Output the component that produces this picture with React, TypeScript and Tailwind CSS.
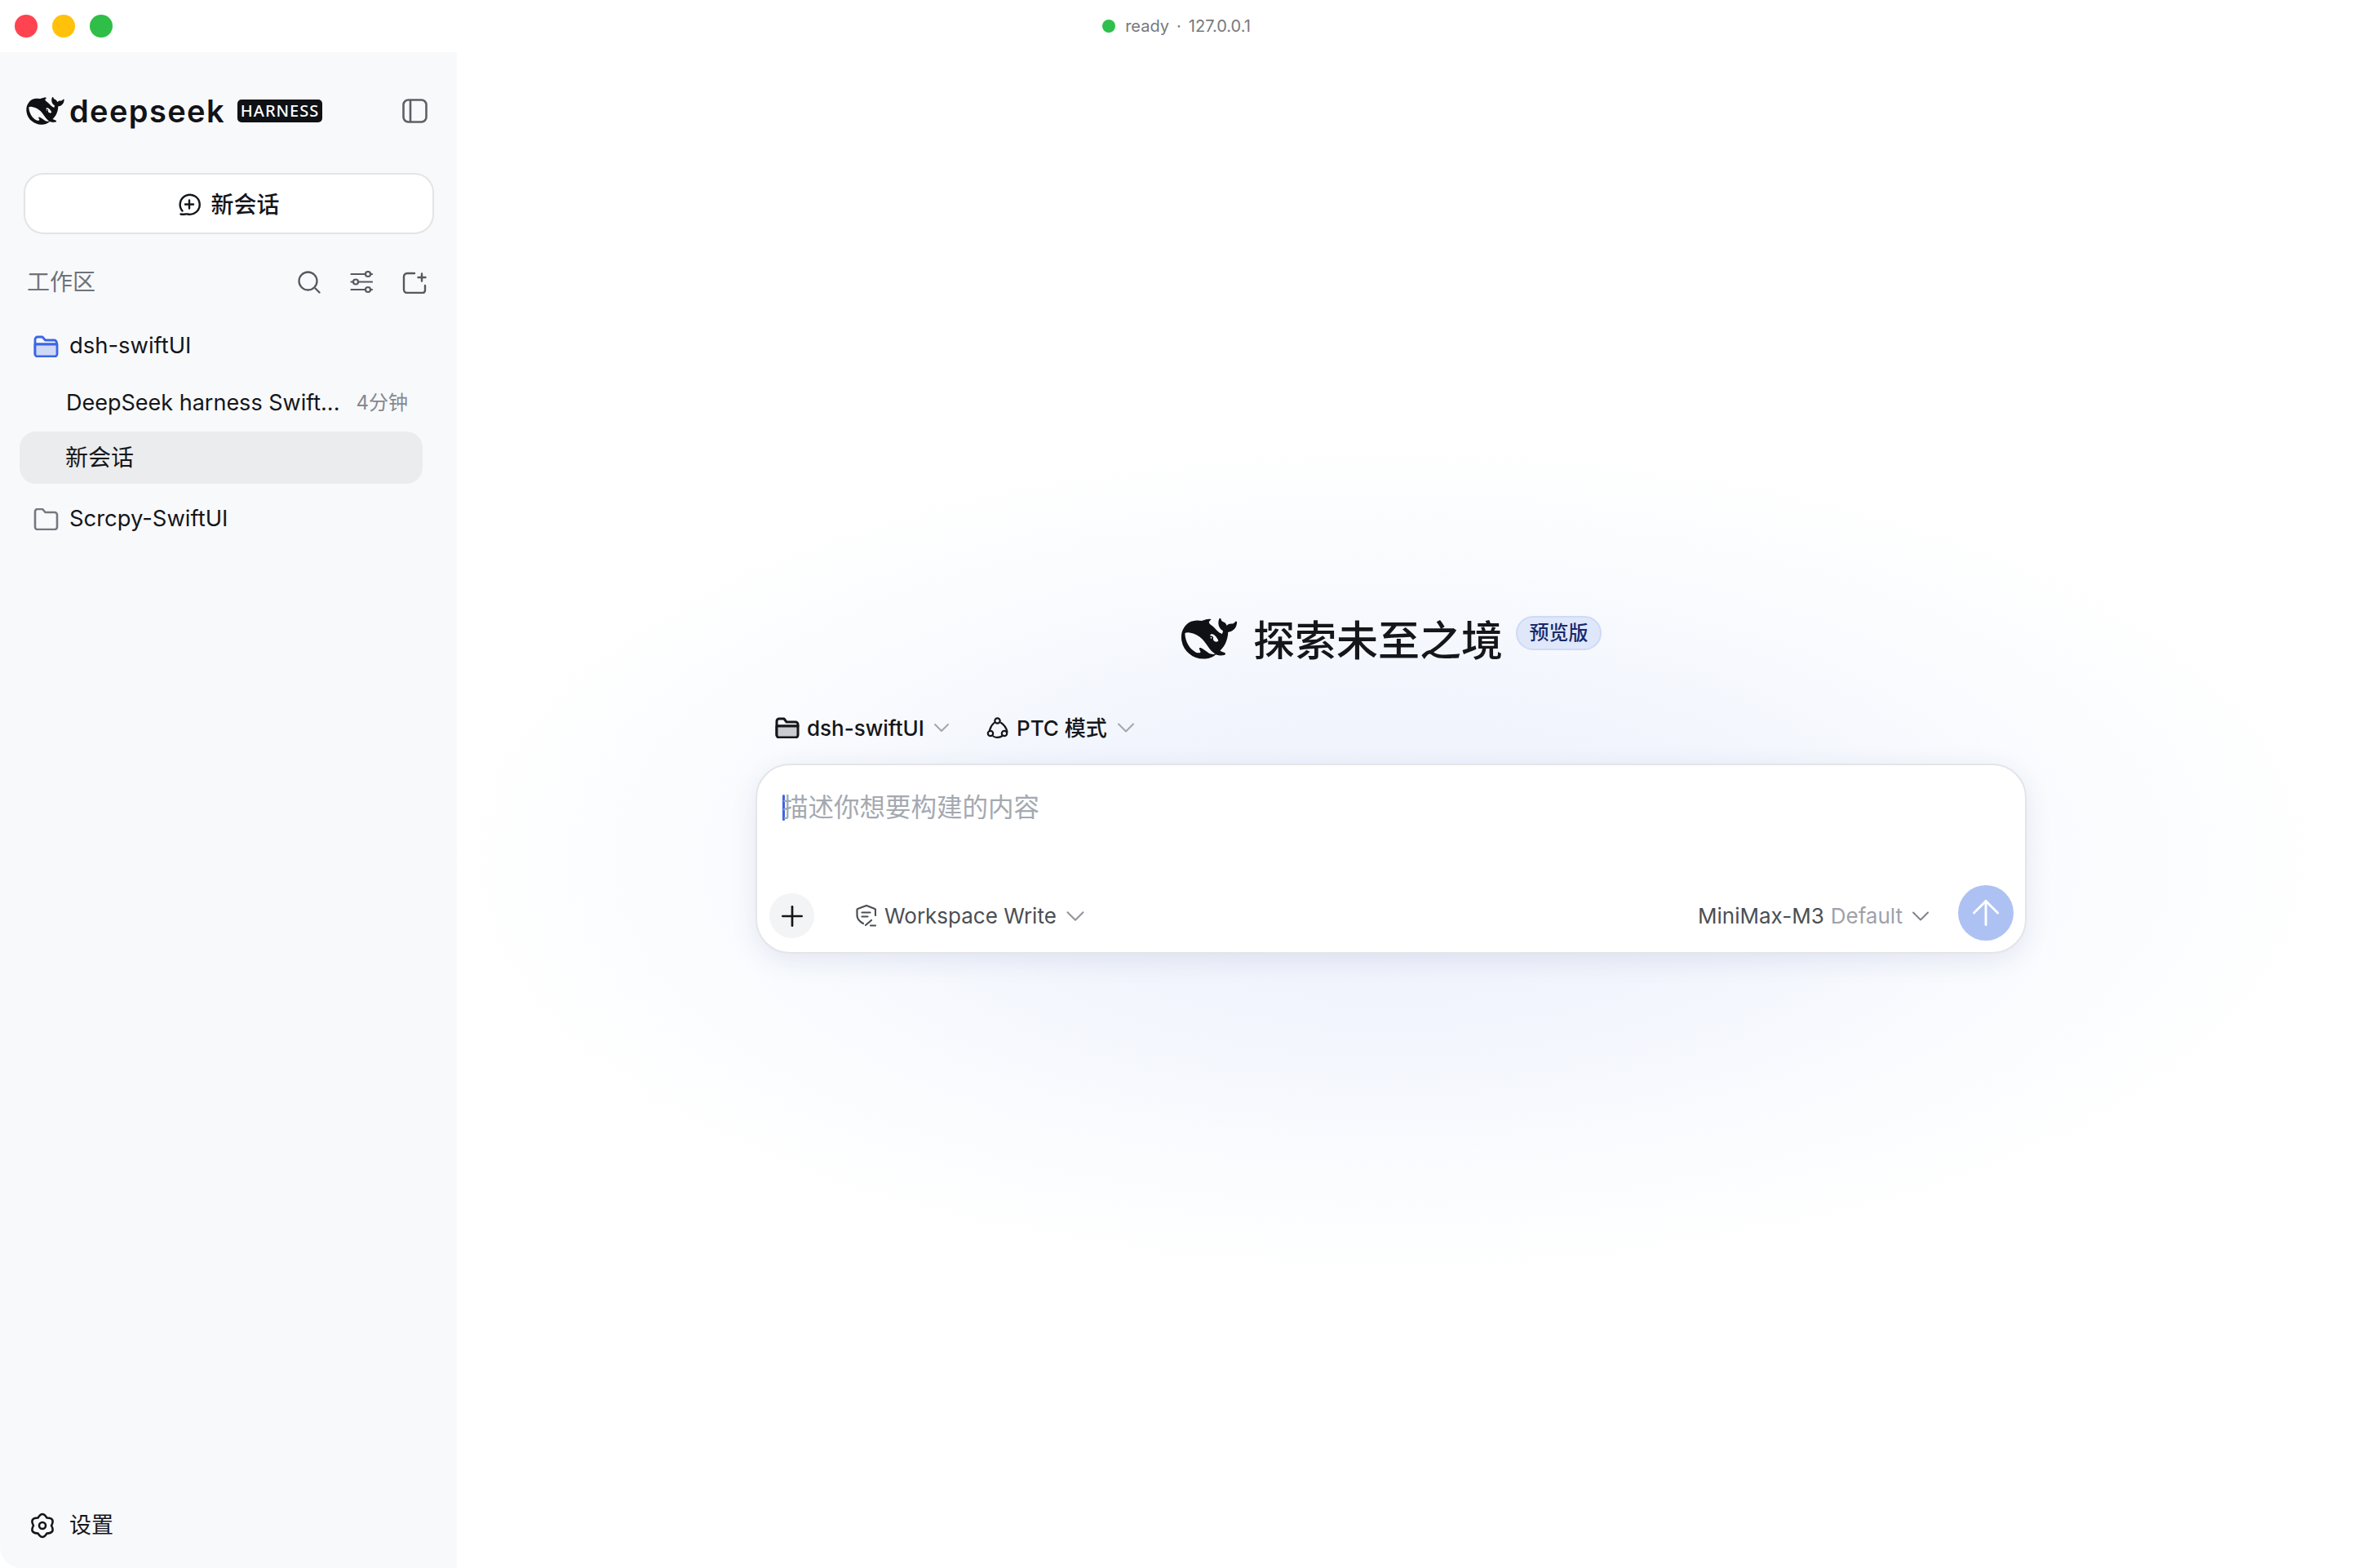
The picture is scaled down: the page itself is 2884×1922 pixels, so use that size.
import { ChevronDown, Plus, ArrowUp } from "lucide-react";

function Whale({ className }: { className: string }) {
  return (
    <svg className={className} viewBox="0 3.2 24 17.6" fill="#0f1114">
      <path d="M23.748 4.482c-.254-.124-.364.113-.512.234-.051.039-.094.09-.137.136-.372.397-.806.657-1.373.626-.829-.046-1.537.214-2.163.848-.133-.782-.575-1.248-1.247-1.548-.352-.156-.708-.311-.955-.65-.172-.241-.219-.51-.305-.774-.055-.16-.11-.323-.293-.35-.2-.031-.278.136-.356.276-.313.572-.434 1.202-.422 1.84.027 1.436.633 2.58 1.838 3.393.137.093.172.187.129.323-.082.28-.18.552-.266.833-.055.179-.137.217-.329.14a5.526 5.526 0 01-1.736-1.18c-.857-.828-1.631-1.742-2.597-2.458a11.365 11.365 0 00-.689-.471c-.985-.957.13-1.743.388-1.836.27-.098.093-.432-.779-.428-.872.004-1.67.295-2.687.684a3.055 3.055 0 01-.465.137 9.597 9.597 0 00-2.883-.102c-1.885.21-3.39 1.102-4.497 2.623C.082 8.606-.231 10.684.152 12.85c.403 2.284 1.569 4.175 3.36 5.653 1.858 1.533 3.997 2.284 6.438 2.14 1.482-.085 3.133-.284 4.994-1.86.47.234.962.327 1.78.397.63.059 1.236-.03 1.705-.128.735-.156.684-.837.419-.961-2.155-1.004-1.682-.595-2.113-.926 1.096-1.296 2.746-2.642 3.392-7.003.05-.347.007-.565 0-.845-.004-.17.035-.237.23-.256a4.173 4.173 0 001.545-.475c1.396-.763 1.96-2.015 2.093-3.517.02-.23-.004-.467-.247-.588zM11.581 18c-2.089-1.642-3.102-2.183-3.52-2.16-.392.024-.321.471-.235.763.09.288.207.486.371.739.114.167.192.416-.113.603-.673.416-1.842-.14-1.897-.167-1.361-.802-2.5-1.86-3.301-3.307-.774-1.393-1.224-2.887-1.298-4.482-.02-.386.093-.522.477-.592a4.696 4.696 0 011.529-.039c2.132.312 3.946 1.265 5.468 2.774.868.86 1.525 1.887 2.202 2.891.72 1.066 1.494 2.082 2.48 2.914.348.292.625.514.891.677-.802.09-2.14.11-3.054-.614zm1-6.44a.306.306 0 01.415-.287.302.302 0 01.2.288.306.306 0 01-.31.307.303.303 0 01-.304-.308zm3.11 1.596c-.2.081-.399.151-.59.16a1.245 1.245 0 01-.798-.254c-.274-.23-.47-.358-.552-.758a1.73 1.73 0 01.016-.588c.07-.327-.008-.537-.239-.727-.187-.156-.426-.199-.688-.199a.559.559 0 01-.254-.078c-.11-.054-.2-.19-.114-.358.028-.054.16-.186.192-.21.356-.202.767-.136 1.146.016.352.144.618.408 1.001.782.391.451.462.576.685.914.176.265.336.537.445.848.067.195-.019.354-.25.452z" />
    </svg>
  );
}

export default function App() {
  return (
    <div className="flex h-[1922px] w-[2884px] flex-col overflow-hidden bg-white font-['Inter','Noto_Sans_CJK_SC',sans-serif] text-[#14161a]">
      {/* title bar */}
      <div className="grid h-16 shrink-0 grid-cols-[1fr_auto_1fr] items-center pl-[18px]">
        <div className="flex gap-[18px]">
          <span className="h-7 w-7 rounded-full bg-[#ff4350]" />
          <span className="h-7 w-7 rounded-full bg-[#ffc10a]" />
          <span className="h-7 w-7 rounded-full bg-[#2fbe47]" />
        </div>
        <div className="mr-[18px] flex items-center text-[20px] text-[#77797d]">
          <span className="mr-[12px] h-4 w-4 rounded-full bg-[#2fbf4e]" />
          <span>ready</span>
          <span className="mx-[9px]">·</span>
          <span>127.0.0.1</span>
        </div>
      </div>

      <div className="flex min-h-0 flex-1">
        {/* sidebar */}
        <aside className="flex w-[560px] shrink-0 flex-col rounded-bl-[26px] bg-[#f8f9fb] pl-[24px]">
          <div className="mt-[43px] flex h-[58px] items-center pl-2 pr-[36px]">
            <Whale className="h-[34px] w-[47px] shrink-0" />
            <span className="ml-[6px] text-[38px] leading-none font-semibold tracking-[1.4px] text-[#111317]">deepseek</span>
            <span className="ml-[15px] flex h-7 w-[104px] items-center justify-center rounded-[5px] bg-[#0f1114] font-['Noto_Sans',sans-serif] text-[20px] font-medium tracking-[1px] text-white">HARNESS</span>
            <svg className="ml-auto h-[30px] w-[31px] text-[#5c6068]" viewBox="0 0 31 30" fill="none" stroke="currentColor" strokeWidth="2.6">
              <rect x="1.5" y="1.5" width="28" height="27" rx="6" />
              <path d="M10 1.5v27" />
            </svg>
          </div>

          <div className="ml-[5px] mt-[47px] flex h-[75px] w-[503px] items-center justify-center gap-[12px] rounded-[24px] border-2 border-[#e3e4e7] bg-white pt-[2px] text-[28px] font-medium">
            <svg className="h-[28px] w-[28px]" viewBox="0 0 28 28" fill="none" stroke="#14161a" strokeWidth="2.4" strokeLinecap="round" strokeLinejoin="round">
              <path d="M5.5 21.500A12 12 0 1 1 12 25.500C9.500 25 8 26.200 3.500 25.500" />
              <path d="M14 8.500v10M9 13.500h10" />
            </svg>
            新会话
          </div>

          <div className="mt-[38px] flex items-center pl-[9px] pr-[37px]">
            <span className="text-[28px] text-[#6f737a]">工作区</span>
            <div className="ml-auto flex items-center gap-[36px] text-[#55595f]">
              <svg className="h-[28px] w-[28px]" viewBox="0 0 28 28" fill="none" stroke="currentColor" strokeWidth="2.300" strokeLinecap="round">
                <circle cx="12.500" cy="12.500" r="11" />
                <path d="M21.500 21.500l5 5" />
              </svg>
              <svg className="h-[28px] w-[28px]" viewBox="0 0 28 28" fill="none" stroke="currentColor" strokeWidth="2.200" strokeLinecap="round">
                <path d="M1.500 4H18.500M25.500 4H27M1.500 13.500H3.500M10.500 13.500H27M1.500 23H18.500M25.500 23H27" />
                <circle cx="22" cy="4" r="3" />
                <circle cx="7" cy="13.500" r="3" />
                <circle cx="22" cy="23" r="3" />
              </svg>
              <svg className="h-[28px] w-[30px]" viewBox="0 0 30 28" fill="none" stroke="currentColor" strokeWidth="2.400" strokeLinecap="round" strokeLinejoin="round">
                <path d="M15 3H6a4 4 0 0 0-4 4v16a4 4 0 0 0 4 4h19a3 3 0 0 0 3-3v-6" />
                <path d="M24 3.500v9M19.500 8h9" />
              </svg>
            </div>
          </div>

          <div className="mt-[34px] flex h-[46px] items-center pl-[17px] text-[27.4px]">
            <svg className="mr-[13px] h-[27px] w-[31px]" viewBox="0 0 31 27" fill="none" stroke="#3b66e6" strokeWidth="2.8" strokeLinejoin="round">
              <path d="M2 23V5a3 3 0 0 1 3-3h6l3.5 4h11a3 3 0 0 1 3 3v2H2z" />
              <path d="M2 11h27v12a3 3 0 0 1-3 3H5a3 3 0 0 1-3-3z" fill="#cfd9f7" />
            </svg>
            dsh-swiftUI
          </div>
          <div className="mt-[24px] flex h-[46px] w-[494px] items-center pl-[57px] pr-[18px] text-[27px]">
            <span>DeepSeek harness Swift...</span>
            <span className="ml-auto text-[24px] text-[#84888f]">4分钟</span>
          </div>
          <div className="mt-[12px] flex h-[64px] w-[494px] items-center rounded-[20px] bg-[#ebecee] pl-[56px] text-[28px]">新会话</div>
          <div className="mt-[20px] flex h-[46px] items-center pl-[17px] text-[27.4px]">
            <svg className="mr-[13px] h-[27px] w-[31px]" viewBox="0 0 31 27" fill="none" stroke="#74787f" strokeWidth="2.6" strokeLinejoin="round">
              <path d="M2 23V4a3 3 0 0 1 3-3h6l3.5 4H26a3 3 0 0 1 3 3v15a3 3 0 0 1-3 3H5a3 3 0 0 1-3-3z" />
            </svg>
            Scrcpy-SwiftUI
          </div>

          <div className="mb-[32px] mt-auto flex items-center pl-[12px] text-[27px]">
            <svg className="mr-[17px] h-[32px] w-[32px]" viewBox="0 0 32 32" fill="none" stroke="#14161a" strokeWidth="2.6" strokeLinejoin="round">
              <path d="M10.500 6.500Q16-2.500 21.500 6.500 32 6.750 27 16q5 9.250-5.500 9.500-5.500 9-11 0Q0 25.250 5 16 0 6.750 10.500 6.500z" />
              <circle cx="16" cy="16" r="4" />
            </svg>
            设置
          </div>
        </aside>

        {/* main */}
        <main className="flex flex-1 flex-col items-center bg-[radial-gradient(ellipse_1150px_510px_at_1145px_990px,#eef2fc_0%,#f2f5fd_40%,#f9fbfe_70%,#ffffff_100%)] pr-[34px] pt-[691px]">
          <div className="flex items-start">
            <Whale className="mt-[3px] h-[50px] w-[70px]" />
            <span className="ml-[19px] text-[51px] leading-[62px] font-medium">探索未至之境</span>
            <span className="ml-[16px] flex h-[42px] w-[105px] items-center justify-center rounded-full border-2 border-[#cfdaf6] bg-[#dfe7fb] text-[24px] font-medium text-[#17296b]">预览版</span>
          </div>

          <div className="mt-[31px] flex h-[88px] w-[1558px] items-center pl-[24px] text-[26px] font-medium">
            <svg className="mr-[9px] h-[26px] w-[30px]" viewBox="0 0 30 26" fill="none" stroke="#14161a" strokeWidth="3" strokeLinejoin="round">
              <path d="M2 22V5a3 3 0 0 1 3-3h6l3 4h11a3 3 0 0 1 3 3v2H2z" />
              <path d="M2 11h26v11a3 3 0 0 1-3 3H5a3 3 0 0 1-3-3z" fill="#c9cbd0" />
            </svg>
            dsh-swiftUI
            <ChevronDown className="ml-[5px] h-[32px] w-[32px] text-[#a2a6ad]" strokeWidth={1.5} />
            <svg className="ml-[39px] mr-[9px] h-[26px] w-[28px]" viewBox="0 0 28 26" fill="none" stroke="#14161a" strokeWidth="2.200" strokeLinecap="round">
              <circle cx="13.500" cy="4.500" r="3.200" />
              <circle cx="5" cy="20" r="3.200" />
              <circle cx="22" cy="20" r="3.200" />
              <path d="M9.500 7C7 9 5 12 4 16M18 7c3 2 6.500 6 7.500 11M8.500 23.500c2.500 2 7.500 2 11-.5" />
            </svg>
            PTC 模式
            <ChevronDown className="ml-[5px] h-[36px] w-[36px] text-[#a2a6ad]" strokeWidth={1.4} />
          </div>

          <div className="flex h-[233px] w-[1558px] flex-col rounded-[42px] border-2 border-[#e4e5e8] bg-white shadow-[0_8px_32px_rgba(40,60,120,0.10)]">
            <div className="flex items-center pl-[31px] pt-[35px] text-[31.5px] leading-[34px] text-[#a4a9b1]">
              <span className="h-8 w-[3px] shrink-0 rounded-full bg-[#3b63e8]" />
              <span className="-ml-[3px]">描述你想要构建的内容</span>
            </div>
            <div className="mt-auto flex items-center pb-[14px] pl-[15px] pr-[14px]">
              <div className="mt-[7px] flex items-center text-[26px] text-[#4b4f55]">
                <span className="flex h-[55px] w-[55px] items-center justify-center rounded-full bg-[#f3f4f5] text-[#14161a]">
                  <Plus className="h-[40px] w-[40px]" strokeWidth={1.6} />
                </span>
                <svg className="ml-[51px] mr-[10px] h-[27px] w-[25px]" viewBox="0 0 25 27" fill="none" stroke="currentColor" strokeWidth="2.200" strokeLinecap="round" strokeLinejoin="round">
                  <path d="M24 13V6a1 1 0 0 0-.8-1L13 1 2.300 5a1 1 0 0 0-.8 1V13c0 4 3 7.500 7.500 10" />
                  <path d="M7.500 9.500h10M7.500 14.500h7M12 25l7-6M18 25.500h6" />
                </svg>
                <span>Workspace Write</span>
                <ChevronDown className="ml-[4px] h-[38px] w-[38px] text-[#92969d]" strokeWidth={1.3} />
              </div>
              <div className="ml-auto mr-[28px] mt-[7px] flex items-center text-[26px] text-[#4b4f55]">
                <span>MiniMax-M3</span>
                <span className="ml-[8px] text-[#9ea2a9]">Default</span>
                <ChevronDown className="ml-[4px] h-[36px] w-[36px] text-[#7d8189]" strokeWidth={1.3} />
              </div>
              <span className="flex h-[68px] w-[68px] items-center justify-center rounded-full bg-[#aec1f3]">
                <ArrowUp className="h-[50px] w-[50px] text-white" strokeWidth={1.4} />
              </span>
            </div>
          </div>
        </main>
      </div>
    </div>
  );
}
